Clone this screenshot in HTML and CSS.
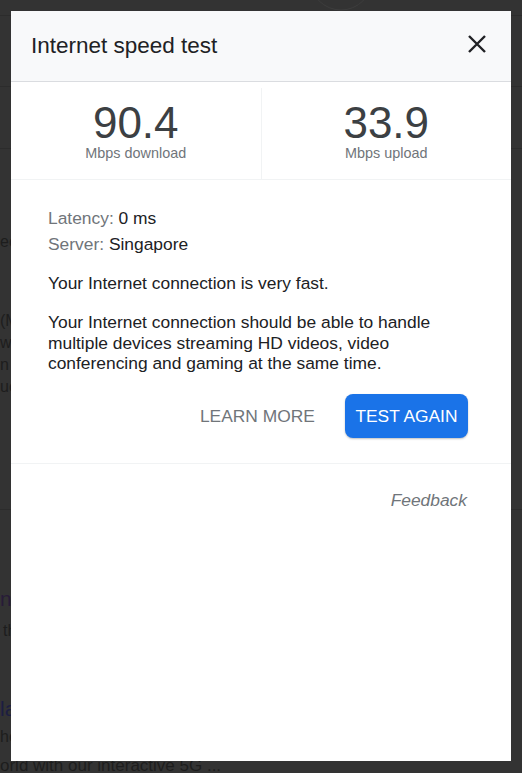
FILE: index.html
```html
<!DOCTYPE html>
<html lang="en">
<head>
    <meta charset="UTF-8">
    <meta name="viewport" content="width=device-width, initial-scale=1.0">
    <title>Internet speed test</title>
    <link rel="stylesheet" href="styles.css">
</head>
<body>
    <div class="page">
        <div class="page-bar">
            <svg class="page-logo" width="64" height="32" viewBox="0 0 64 32"><circle cx="32" cy="0" r="31" fill="none" stroke="#3d3d3d" stroke-width="1"/></svg>
        </div>
        <div class="page-nav"></div>
        <div class="page-tabs"></div>
        <div class="result">
            <p class="res-snippet res-first">ec</p>
            <p class="res-snippet res-gap">(M</p>
            <p class="res-snippet">wi</p>
            <p class="res-snippet">n</p>
            <p class="res-snippet">uc</p>
        </div>
        <div class="result-plain">
            <p class="res-title res-visited">n</p>
            <p class="res-snippet res-near">th</p>
            <p class="res-title res-link res-far">la</p>
            <p class="res-snippet res-tight">he</p>
            <p class="res-snippet res-tail">orld with our interactive 5G ...</p>
        </div>
    </div>

    <div class="dialog">
        <div class="dialog-head">
            <h1 class="dialog-title">Internet speed test</h1>
            <button class="close-btn" aria-label="Close">
                <svg width="18" height="18" viewBox="0 0 18 18"><path d="M1 1L17 17M17 1L1 17" stroke="#202124" stroke-width="2.4" fill="none"/></svg>
            </button>
        </div>

        <div class="stats">
            <div class="stat stat-first">
                <div class="stat-num">90.4</div>
                <div class="stat-label">Mbps download</div>
            </div>
            <div class="stat">
                <div class="stat-num">33.9</div>
                <div class="stat-label">Mbps upload</div>
            </div>
        </div>

        <div class="details">
            <div class="info-row"><span class="info-key">Latency:</span> 0 ms</div>
            <div class="info-row"><span class="info-key">Server:</span> Singapore</div>
            <p class="summary summary-first">Your Internet connection is very fast.</p>
            <p class="summary">Your Internet connection should be able to handle multiple devices streaming HD videos, video conferencing and gaming at the same time.</p>
            <div class="actions">
                <button class="btn-text">LEARN MORE</button>
                <button class="btn-primary">TEST AGAIN</button>
            </div>
        </div>

        <div class="dialog-foot">
            <a class="feedback">Feedback</a>
        </div>
    </div>
</body>
</html>
```

FILE: styles.css
```css
body {
    font-family: "Liberation Sans", Arial, sans-serif;
    background-color: #333333;
    margin: 0;
    overflow: hidden;
}

/* page behind the dialog */
.page {
    color: #1d1d1d;
}
.page-bar {
    position: relative;
    height: 15px;
    border-bottom: 1px solid #2c2c2c;
}
.page-logo {
    position: absolute;
    left: 309px;
    top: -21px;
}
.page-nav {
    height: 70px;
    border-bottom: 1px solid #2c2c2c;
}
.page-tabs {
    height: 61px;
    border-bottom: 1px solid #2c2c2c;
}
.result {
    padding-bottom: 111px;
    border-bottom: 1px solid #2c2c2c;
}
.res-snippet {
    margin: 0;
    font-size: 16px;
    line-height: 22px;
    white-space: nowrap;
}
.res-first {
    padding-top: 82px;
}
.res-gap {
    margin-top: 57px;
}
.res-title {
    margin: 0;
    font-size: 21px;
    line-height: 26px;
    white-space: nowrap;
}
.res-visited {
    margin-top: 76px;
    color: #271b38;
}
.res-link {
    color: #1c1d42;
}
.res-near {
    margin-top: 8px;
    padding-left: 3px;
}
.res-far {
    margin-top: 54px;
}
.res-tight {
    margin-top: 4px;
}
.res-tail {
    margin-top: 7px;
    font-size: 17px;
}

/* dialog */
.dialog {
    position: fixed;
    left: 11px;
    top: 11px;
    width: 500px;
    height: 750px;
    background-color: #ffffff;
}
.dialog-head {
    display: flex;
    align-items: center;
    justify-content: space-between;
    height: 70px;
    padding: 0 25px 0 20px;
    background-color: #f8f9fa;
    border-bottom: 1px solid #dadce0;
}
.dialog-title {
    margin: 0;
    font-size: 22.5px;
    font-weight: normal;
    color: #202124;
}
.close-btn {
    display: flex;
    padding: 0;
    margin-bottom: 4px;
    border: none;
    background: none;
    cursor: pointer;
}

.stats {
    display: flex;
    border-bottom: 1px solid #f1f3f4;
}
.stat {
    flex: 1;
    text-align: center;
    padding: 19px 0 17px;
}
.stat-first {
    margin-top: 6px;
    padding-top: 13px;
    border-right: 1px solid #f1f3f4;
}
.stat-num {
    font-size: 44px;
    line-height: 44px;
    color: #3c4043;
}
.stat-label {
    font-size: 14.4px;
    line-height: 17px;
    color: #70757a;
}

.details {
    padding: 25px 43px 25px 37px;
    border-bottom: 1px solid #f1f3f4;
    font-size: 17.4px;
    color: #202124;
}
.info-row {
    line-height: 26px;
}
.info-key {
    color: #70757a;
}
.summary {
    margin: 19px 0 0;
    line-height: 20.3px;
}
.summary-first {
    margin-top: 16px;
}
.actions {
    display: flex;
    justify-content: flex-end;
    gap: 20px;
    margin-top: 21px;
}
.btn-text,
.btn-primary {
    height: 44px;
    padding: 0 10px;
    font-family: inherit;
    font-size: 17.4px;
    border: none;
    border-radius: 8px;
    cursor: pointer;
}
.btn-text {
    background: none;
    color: #70757a;
}
.btn-primary {
    padding: 0 10.5px;
    background-color: #1a73e8;
    color: #ffffff;
    box-shadow: 0 1px 2px rgba(0, 0, 0, 0.25);
}

.dialog-foot {
    display: flex;
    justify-content: flex-end;
    padding: 26px 44px 0 0;
}
.feedback {
    font-size: 17.4px;
    line-height: 20.3px;
    font-style: italic;
    color: #70757a;
    cursor: pointer;
}
```
